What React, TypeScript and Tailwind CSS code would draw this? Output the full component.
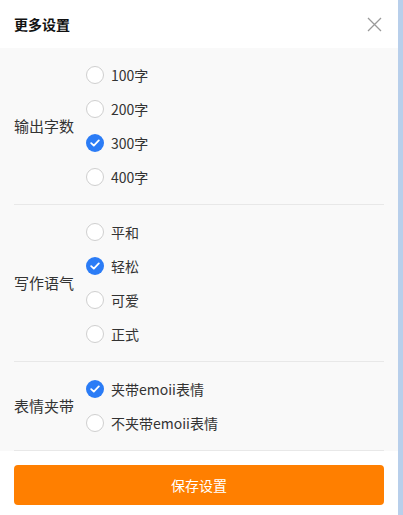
import React, { useState } from "react";

const font = { fontFamily: '"Noto Sans CJK SC", "Noto Sans", sans-serif' };

function Radio({ checked, label, onClick }: { checked: boolean; label: string; onClick: () => void }) {
  return (
    <div className="flex h-[34px] items-center cursor-pointer" onClick={onClick}>
      {checked ? (
        <span className="flex h-[18px] w-[18px] items-center justify-center rounded-full bg-[#2b7cf6]">
          <svg width="10" height="8" viewBox="0 0 10 8" fill="none">
            <path d="M1.2 4.2 L3.8 6.6 L8.8 1.4" stroke="white" strokeWidth="1.8" strokeLinecap="round" strokeLinejoin="round" />
          </svg>
        </span>
      ) : (
        <span className="h-[18px] w-[18px] rounded-full border border-[#cfcfcf] bg-white" />
      )}
      <span className="ml-[7px] text-[14px] text-[#333]">{label}</span>
    </div>
  );
}

function Section({ title, options, value, onChange }: { title: string; options: string[]; value: number; onChange: (i: number) => void }) {
  return (
    <div className="mx-[14px] flex items-center border-b border-[#e8e8e8] py-[10px]">
      <div className="w-[72px] text-[15px] text-[#333]">{title}</div>
      <div className="flex flex-col">
        {options.map((o, i) => (
          <Radio key={o} label={o} checked={value === i} onClick={() => onChange(i)} />
        ))}
      </div>
    </div>
  );
}

export default function App() {
  const [a, setA] = useState(2);
  const [b, setB] = useState(1);
  const [c, setC] = useState(0);
  return (
    <div className="flex h-[515px] w-[403px] bg-white" style={font}>
      <div className="flex w-[398px] flex-col bg-white">
        <div className="flex h-[48px] items-center justify-between pl-[14px] pr-[16px]">
          <span className="text-[14px] font-bold text-[#111]">更多设置</span>
          <svg width="15" height="15" viewBox="0 0 15 15">
            <path d="M1 1 L14 14 M14 1 L1 14" stroke="#9a9a9a" strokeWidth="1.3" />
          </svg>
        </div>
        <div className="bg-[#f9f9f9]">
          <Section title="输出字数" options={["100字", "200字", "300字", "400字"]} value={a} onChange={setA} />
          <Section title="写作语气" options={["平和", "轻松", "可爱", "正式"]} value={b} onChange={setB} />
          <Section title="表情夹带" options={["夹带emoii表情", "不夹带emoii表情"]} value={c} onChange={setC} />
        </div>
        <div className="px-[14px] pt-[14px]">
          <button className="flex h-[40px] w-full items-center justify-center rounded-[4px] bg-[#ff7f00] text-[14px] text-white">
            保存设置
          </button>
        </div>
      </div>
      <div className="flex-1 bg-[#b8cfeb]" />
    </div>
  );
}
